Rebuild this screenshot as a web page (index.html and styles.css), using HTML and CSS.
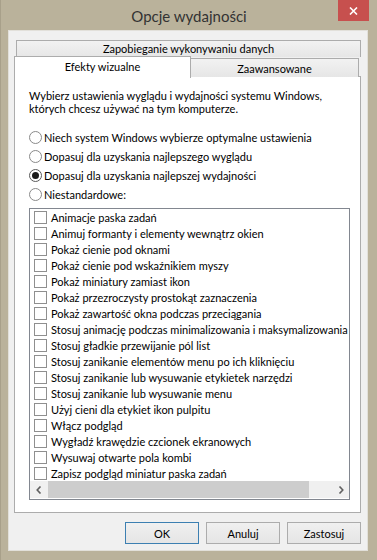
FILE: index.html
```html
<!DOCTYPE html>
<html lang="pl">
<head>
  <meta charset="UTF-8" />
  <meta name="viewport" content="width=device-width, initial-scale=1.0"/>
  <title>Opcje wydajności</title>
  <link rel="stylesheet" href="styles.css">
</head>
<body>
  <div class="window">
    <div class="titlebar">
      <span class="title">Opcje wydajności</span>
      <button class="close" aria-label="Zamknij">
        <svg width="9" height="8" viewBox="0 0 9 8"><path d="M1 0.5 L8 7.5 M8 0.5 L1 7.5" stroke="#fff" stroke-width="1.6" fill="none"/></svg>
      </button>
    </div>

    <div class="client">
      <div class="tabs">
        <div class="tab-row back">
          <div class="tab wide">Zapobieganie wykonywaniu danych</div>
        </div>
        <div class="tab-row front">
          <div class="tab active">Efekty wizualne</div>
          <div class="tab other">Zaawansowane</div>
        </div>

        <div class="panel">
          <p class="intro">Wybierz ustawienia wyglądu i wydajności systemu Windows,<br>których chcesz używać na tym komputerze.</p>

          <div class="radios">
            <div class="radio-row"><span class="radio"></span>Niech system Windows wybierze optymalne ustawienia</div>
            <div class="radio-row"><span class="radio"></span>Dopasuj dla uzyskania najlepszego wyglądu</div>
            <div class="radio-row"><span class="radio checked"></span>Dopasuj dla uzyskania najlepszej wydajności</div>
            <div class="radio-row"><span class="radio"></span>Niestandardowe:</div>
          </div>

          <div class="listbox">
            <div class="list-items">
              <div class="item"><span class="check"></span>Animacje paska zadań</div>
              <div class="item"><span class="check"></span>Animuj formanty i elementy wewnątrz okien</div>
              <div class="item"><span class="check"></span>Pokaż cienie pod oknami</div>
              <div class="item"><span class="check"></span>Pokaż cienie pod wskaźnikiem myszy</div>
              <div class="item"><span class="check"></span>Pokaż miniatury zamiast ikon</div>
              <div class="item"><span class="check"></span>Pokaż przezroczysty prostokąt zaznaczenia</div>
              <div class="item"><span class="check"></span>Pokaż zawartość okna podczas przeciągania</div>
              <div class="item"><span class="check"></span>Stosuj animację podczas minimalizowania i maksymalizowania okien</div>
              <div class="item"><span class="check"></span>Stosuj gładkie przewijanie pól list</div>
              <div class="item"><span class="check"></span>Stosuj zanikanie elementów menu po ich kliknięciu</div>
              <div class="item"><span class="check"></span>Stosuj zanikanie lub wysuwanie etykietek narzędzi</div>
              <div class="item"><span class="check"></span>Stosuj zanikanie lub wysuwanie menu</div>
              <div class="item"><span class="check"></span>Użyj cieni dla etykiet ikon pulpitu</div>
              <div class="item"><span class="check"></span>Włącz podgląd</div>
              <div class="item"><span class="check"></span>Wygładź krawędzie czcionek ekranowych</div>
              <div class="item"><span class="check"></span>Wysuwaj otwarte pola kombi</div>
              <div class="item"><span class="check"></span>Zapisz podgląd miniatur paska zadań</div>
            </div>
            <div class="hscroll">
              <span class="arrow">
                <svg width="6" height="8" viewBox="0 0 6 8"><path d="M4.5 0.5 L1.2 4 L4.5 7.5" stroke="#606060" stroke-width="1.6" fill="none"/></svg>
              </span>
              <div class="track"><div class="thumb"></div></div>
              <span class="arrow">
                <svg width="6" height="8" viewBox="0 0 6 8"><path d="M1.5 0.5 L4.8 4 L1.5 7.5" stroke="#606060" stroke-width="1.6" fill="none"/></svg>
              </span>
            </div>
          </div>
        </div>
      </div>

      <div class="buttons">
        <button class="btn default">OK</button>
        <button class="btn">Anuluj</button>
        <button class="btn">Zastosuj</button>
      </div>
    </div>
  </div>
</body>
</html>
```

FILE: styles.css
```css
* {
  margin: 0;
  padding: 0;
  box-sizing: border-box;
}

body {
  background: #bab29b;
  font-family: 'Lato', 'Liberation Sans', sans-serif;
  font-size: 11px;
  color: #000;
}

.window {
  width: 377px;
  height: 560px;
  background: #bab29b;
  border-left: 1px solid #a8a08a;
}

/* title bar */
.titlebar {
  position: relative;
  height: 30px;
  display: flex;
  align-items: center;
  justify-content: center;
}

.title {
  font-size: 15px;
  color: #333;
  margin-top: 2px;
}

.close {
  position: absolute;
  top: 0;
  right: 8px;
  width: 31px;
  height: 21px;
  border: none;
  background: #c7504e;
  display: flex;
  align-items: center;
  justify-content: center;
}

/* client area */
.client {
  margin: 0 9px 0 7px;
  height: 521px;
  background: #f0f0f0;
  border: 1px solid #e2e0da;
}

.tabs {
  padding: 9px 0 0 5px;
  width: 353px;
}

.tab-row {
  display: flex;
}

.tab {
  font-size: 11px;
  text-align: center;
  border: 1px solid #acacac;
  border-bottom: none;
  background: linear-gradient(#f2f2f2, #e6e6e6);
}

.back {
  padding-left: 2px;
}

.tab.wide {
  width: 345px;
  height: 17px;
  line-height: 16px;
}

.front {
  margin-top: -1px;
  align-items: flex-start;
}

.tab.active {
  position: relative;
  z-index: 1;
  width: 177px;
  height: 22px;
  line-height: 19px;
  background: #fff;
  margin-bottom: -1px;
}

.tab.other {
  width: 169px;
  height: 19px;
  margin-top: 2px;
  margin-left: -1px;
  line-height: 19px;
}

.panel {
  width: 347px;
  height: 437px;
  margin-top: -1px;
  background: #fff;
  border: 1px solid #acacac;
  padding: 12px 11px 0 14px;
}

.intro {
  line-height: 13px;
}

.radios {
  margin-top: 13px;
}

.radio-row {
  height: 19px;
  display: flex;
  align-items: center;
}

.radio {
  width: 13px;
  height: 13px;
  border: 1px solid #8a8a8a;
  border-radius: 50%;
  background: #fff;
  margin-right: 2px;
  display: flex;
  align-items: center;
  justify-content: center;
}

.radio.checked {
  border-color: #5a5a5a;
}

.radio.checked::after {
  content: "";
  width: 7px;
  height: 7px;
  border-radius: 50%;
  background: #1a1a1a;
}

/* list with checkboxes */
.listbox {
  margin-top: 4px;
  width: 321px;
  height: 292px;
  border: 1px solid #828790;
  background: #fff;
  overflow: hidden;
}

.list-items {
  height: 272px;
}

.item {
  height: 16px;
  padding-left: 4px;
  display: flex;
  align-items: center;
  white-space: nowrap;
}

.check {
  flex: none;
  width: 13px;
  height: 13px;
  border: 1px solid #8f8f8f;
  background: #fff;
  margin-right: 4px;
}

.hscroll {
  height: 17px;
  display: flex;
  background: #f0f0f0;
}

.arrow {
  width: 17px;
  display: flex;
  align-items: center;
  justify-content: center;
}

.track {
  flex: 1;
  padding: 0 1px;
}

.thumb {
  width: 261px;
  height: 100%;
  background: #cdcdcd;
}

/* dialog buttons */
.buttons {
  display: flex;
  justify-content: flex-end;
  gap: 7px;
  padding-right: 6px;
  margin-top: 9px;
}

.btn {
  width: 74px;
  height: 22px;
  font-family: inherit;
  font-size: 11px;
  color: #000;
  border: 1px solid #acacac;
  background: linear-gradient(#f0f0f0, #e5e5e5);
}

.btn.default {
  border-color: #3c7fb1;
}
```
